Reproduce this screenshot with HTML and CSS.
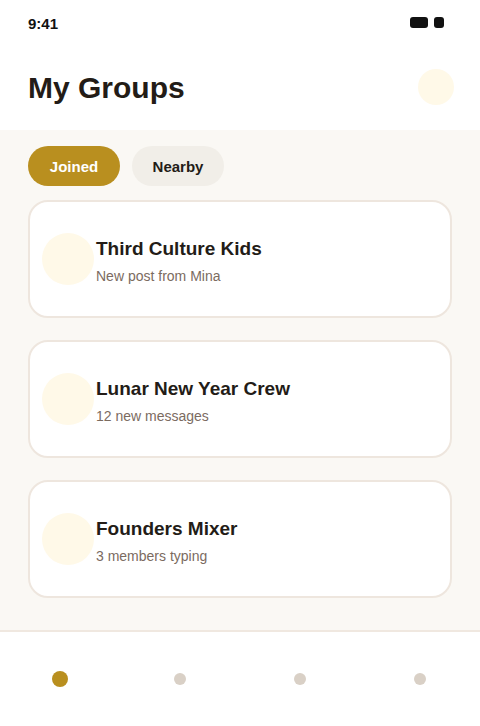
FILE: index.html
```html
<!DOCTYPE html>
<html lang="en">
<head>
<meta charset="UTF-8" />
<meta name="viewport" content="width=device-width, initial-scale=1" />
<title>My Groups</title>
<link rel="stylesheet" href="styles.css">
</head>
<body>

<div class="status-bar">
  <span class="time">9:41</span>
  <div class="status-icons">
    <span class="signal"></span>
    <span class="battery"></span>
  </div>
</div>

<header>
  <h1>My Groups</h1>
  <div class="profile"></div>
</header>

<main>
  <div class="tabs">
    <button class="tab active">Joined</button>
    <button class="tab">Nearby</button>
  </div>

  <ul class="groups">
    <li class="group">
      <div class="avatar"></div>
      <div class="info">
        <h2>Third Culture Kids</h2>
        <p>New post from Mina</p>
      </div>
    </li>
    <li class="group">
      <div class="avatar"></div>
      <div class="info">
        <h2>Lunar New Year Crew</h2>
        <p>12 new messages</p>
      </div>
    </li>
    <li class="group">
      <div class="avatar"></div>
      <div class="info">
        <h2>Founders Mixer</h2>
        <p>3 members typing</p>
      </div>
    </li>
  </ul>
</main>

<nav class="bottom-nav">
  <span class="dot active"></span>
  <span class="dot"></span>
  <span class="dot"></span>
  <span class="dot"></span>
</nav>

</body>
</html>
```

FILE: styles.css
```css
body {
  font-family: 'Liberation Sans', Arial, sans-serif;
  margin: 0;
  width: 480px;
  height: 726px;
  background: white;
  color: #231c17;
  display: flex;
  flex-direction: column;
  overflow: hidden;
}
.status-bar {
  height: 44px;
  padding: 0 28px;
  display: flex;
  justify-content: space-between;
  align-items: center;
  flex-shrink: 0;
}
.time {
  font-size: 15px;
  font-weight: bold;
  color: #111;
  margin-top: 2px;
}
.status-icons {
  display: flex;
  gap: 6px;
  margin-right: 8px;
}
.signal {
  width: 18px;
  height: 11px;
  background: #111;
  border-radius: 3px;
}
.battery {
  width: 10px;
  height: 11px;
  background: #111;
  border-radius: 3px;
}
header {
  height: 86px;
  padding: 0 26px 0 28px;
  display: flex;
  justify-content: space-between;
  align-items: center;
  flex-shrink: 0;
}
header h1 {
  margin: 2px 0 0;
  font-size: 30px;
  font-weight: bold;
}
.profile {
  width: 36px;
  height: 36px;
  border-radius: 50%;
  background: #fff9e8;
}
main {
  height: 500px;
  flex-shrink: 0;
  background: #faf8f4;
  padding: 16px 28px 0;
  box-sizing: border-box;
}
/* Tabs */
.tabs {
  display: flex;
  gap: 12px;
  margin-bottom: 14px;
}
.tab {
  width: 92px;
  height: 40px;
  border: none;
  border-radius: 20px;
  background: #f1eee8;
  color: #231c17;
  font-family: inherit;
  font-size: 15px;
  font-weight: bold;
  padding: 0;
}
.tab.active {
  background: #b98f1f;
  color: white;
}
/* Cards */
.groups {
  list-style: none;
  margin: 0;
  padding: 0;
  display: flex;
  flex-direction: column;
  gap: 22px;
}
.group {
  height: 118px;
  box-sizing: border-box;
  background: white;
  border: 2px solid #eee6de;
  border-radius: 20px;
  padding: 0 12px;
  display: flex;
  align-items: center;
  gap: 2px;
}
.avatar {
  width: 52px;
  height: 52px;
  border-radius: 50%;
  background: #fff9e8;
  flex-shrink: 0;
}
.info {
  padding-top: 4px;
}
.info h2 {
  margin: 0 0 6px;
  font-size: 19px;
  line-height: 24px;
}
.info p {
  margin: 0;
  font-size: 14px;
  line-height: 18px;
  color: #7b6b5f;
}
/* Bottom nav */
.bottom-nav {
  flex-grow: 1;
  border-top: 2px solid #f0e8e0;
  display: grid;
  grid-template-columns: repeat(4, 1fr);
  align-items: center;
  justify-items: center;
}
.dot {
  width: 12px;
  height: 12px;
  border-radius: 50%;
  background: #d9d0c6;
}
.dot.active {
  width: 16px;
  height: 16px;
  background: #b98f1f;
}
```
